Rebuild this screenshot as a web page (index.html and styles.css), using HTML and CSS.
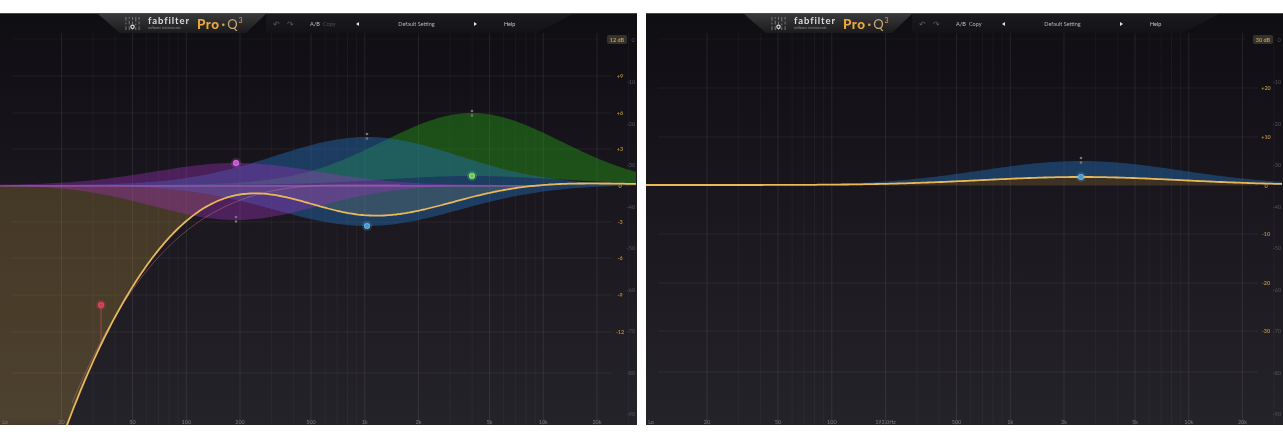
FILE: index.html
```html
<!DOCTYPE html>
<html lang="en">

<head>
	<meta charset="UTF-8" />
	<meta name="viewport" content="width=device-width, initial-scale=1.0" />
	<title>Pro-Q 3 curves</title>
	<link rel="stylesheet" href="styles.css">
</head>

<body>
	<div class="compare">
		<section class="panel">
			<header class="topbar">
				<div class="brand">
					<svg class="brand-icon" viewBox="0 0 16 16">
						<path d="M1 1v4M1 7v2M1 11v4M4.500 1v2M4.500 5v4M4.500 11v4M8 1v3M8 6v3M8 14v1M11.500 1v5M11.500 8v2M11.500 12v3M15 1v3M15 6v3M15 11v4" />
						<circle cx="8" cy="11.500" r="1.800" />
					</svg>
					<div class="brand-name">
						<span class="brand-word">fabfilter</span>
						<span class="brand-sub">software instruments</span>
					</div>
					<div class="product"><b>Pro</b><i>·</i><em>Q</em><sup>3</sup></div>
				</div>
				<div class="tools">
					<span class="undo">↶</span><span class="undo redo">↷</span>
					<span class="ab">A/B</span><span class="copy">Copy</span>
					<span class="arrow arrow-left"></span>
					<span class="preset">Default Setting</span>
					<span class="arrow arrow-right"></span>
					<span class="help">Help</span>
				</div>
			</header>
			<svg class="graph" id="graphA" viewBox="0 33 637 392"></svg>
		</section>
		<section class="panel">
			<header class="topbar">
				<div class="brand">
					<svg class="brand-icon" viewBox="0 0 16 16">
						<path d="M1 1v4M1 7v2M1 11v4M4.500 1v2M4.500 5v4M4.500 11v4M8 1v3M8 6v3M8 14v1M11.500 1v5M11.500 8v2M11.500 12v3M15 1v3M15 6v3M15 11v4" />
						<circle cx="8" cy="11.500" r="1.800" />
					</svg>
					<div class="brand-name">
						<span class="brand-word">fabfilter</span>
						<span class="brand-sub">software instruments</span>
					</div>
					<div class="product"><b>Pro</b><i>·</i><em>Q</em><sup>3</sup></div>
				</div>
				<div class="tools">
					<span class="undo">↶</span><span class="undo redo">↷</span>
					<span class="ab">A/B</span><span class="copy copy-on">Copy</span>
					<span class="arrow arrow-left"></span>
					<span class="preset">Default Setting</span>
					<span class="arrow arrow-right"></span>
					<span class="help">Help</span>
				</div>
			</header>
			<svg class="graph" id="graphB" viewBox="0 33 637 392"></svg>
		</section>
	</div>
	<script src="script.js"></script>
</body>

</html>
```

FILE: styles.css
```css
body {
	margin: 0;
	background: #fff;
	font-family: Lato, 'Open Sans', sans-serif;
}

.compare {
	display: flex;
	gap: 9px;
	padding-top: 13px;
}

.panel {
	width: 637px;
	height: 412px;
	display: flex;
	flex-direction: column;
	background: linear-gradient(#0f0e11 0%, #15121a 25%, #1f1c23 70%, #25232a 100%);
	overflow: hidden;
}

.topbar {
	height: 20px;
	display: flex;
	align-items: center;
	padding-left: 98px;
	border-top: 1px solid #4a4a4c;
	box-sizing: border-box;
	filter: blur(0.3px);
}

.brand {
	width: 168px;
	height: 19px;
	display: flex;
	align-items: center;
	box-sizing: border-box;
	padding-left: 25px;
	background: linear-gradient(#38383b, #1b1b1e);
	clip-path: polygon(0 0, 100% 0, 88% 100%, 13% 100%);
}

.brand-icon {
	width: 19px;
	height: 15px;
	margin-right: 6px;
}

.brand-icon path {
	stroke: #7c7c7c;
	stroke-width: 1;
	fill: none;
}

.brand-icon circle {
	fill: none;
	stroke: #e0e0e0;
	stroke-width: 1.200;
}

.brand-name {
	width: 42px;
	margin-right: 7px;
	display: flex;
	flex-direction: column;
}

.brand-word {
	font-size: 9.500px;
	font-weight: bold;
	line-height: 10px;
	letter-spacing: 0.900px;
	color: #dcdcdc;
}

.brand-sub {
	font-size: 3.500px;
	line-height: 5px;
	color: #8a8a8a;
	white-space: nowrap;
}

.product {
	display: flex;
	align-items: baseline;
	color: #e9a73c;
	font-size: 13px;
	line-height: 14px;
}

.product b {
	font-size: 13.500px;
	font-weight: 900;
	letter-spacing: 0.500px;
}

.product i {
	font-style: normal;
	font-weight: bold;
	margin: 0 2px;
	color: #d8a050;
}

.product em {
	font-style: normal;
	color: #c8a878;
}

.product sup {
	font-size: 7px;
	line-height: 7px;
	align-self: flex-start;
	margin-left: 1px;
	color: #d8a050;
}

.tools {
	width: 307px;
	height: 19px;
	display: flex;
	align-items: center;
	box-sizing: border-box;
	padding-left: 7px;
	font-size: 5.500px;
	color: #b4b4b4;
	background: linear-gradient(rgba(255, 255, 255, 0.05), rgba(255, 255, 255, 0.015));
	clip-path: polygon(0 0, 100% 0, 88% 100%, 0 100%);
}

.undo {
	width: 14px;
	font-size: 8px;
	color: #5a5a5a;
}

.redo {
	width: 23px;
}

.ab {
	width: 13px;
	color: #c4c4c4;
}

.copy {
	width: 33px;
	color: #4e4e4e;
}

.copy-on {
	color: #b4b4b4;
}

.arrow {
	width: 0;
	height: 0;
	border-top: 2.500px solid transparent;
	border-bottom: 2.500px solid transparent;
}

.arrow-left {
	border-right: 3px solid #e4e4e4;
}

.arrow-right {
	border-left: 3px solid #e4e4e4;
}

.preset {
	width: 115px;
	text-align: center;
}

.help {
	margin-left: 27px;
	color: #c4c4c4;
}

.graph {
	display: block;
	width: 637px;
	height: 392px;
	filter: blur(0.3px);
}

.grid-minor {
	stroke: rgba(255, 255, 255, 0.04);
	fill: none;
}

.grid-major {
	stroke: rgba(255, 255, 255, 0.08);
	fill: none;
}

.grid-level {
	stroke: rgba(255, 255, 255, 0.06);
	fill: none;
}

.grid-top {
	stroke: rgba(255, 255, 255, 0.03);
	fill: none;
}

.band-blue {
	fill: rgba(35, 115, 190, 0.42);
}

.band-green {
	fill: rgba(40, 170, 20, 0.4);
}

.band-purple {
	fill: rgba(160, 50, 190, 0.38);
}

.band-gain {
	fill: rgba(190, 150, 60, 0.22);
}

.zero-line {
	stroke: rgba(175, 95, 195, 0.6);
	stroke-width: 1.500;
}

.thin-curve {
	fill: none;
	stroke: rgba(205, 120, 130, 0.55);
	stroke-width: 0.800;
}

.main-curve {
	fill: none;
	stroke: #e8b85a;
	stroke-width: 1.800;
}

.stem {
	stroke: rgba(230, 90, 90, 0.5);
}

.range-dot {
	fill: #77747c;
}

.db-label {
	font-size: 5.500px;
	font-weight: bold;
	fill: #b08a3c;
	text-anchor: middle;
}

.grey-label {
	font-size: 5.500px;
	fill: #55535a;
	text-anchor: middle;
}

.freq-label {
	font-size: 5.500px;
	fill: #7a7880;
	text-anchor: middle;
}

.range-badge {
	fill: #35322e;
}

.badge-text {
	font-size: 5.500px;
	font-weight: bold;
	fill: #c09a50;
	text-anchor: middle;
}
```

FILE: script.js
```js
const ZERO = 185;
const FREQS = [20, 50, 100, 200, 500, 1000, 2000, 5000, 10000, 20000];
const FREQ_NAMES = ["20", "50", "100", "200", "500", "1k", "2k", "5k", "10k", "20k"];
const GREY_SCALE = ["-10", "-20", "-30", "-40", "-50", "-60", "-70", "-80", "-90"];

function freqX(f, left) {
	return left + 178.5 * Math.log10(f / 20);
}

function bell(x, center, height, spread) {
	const d = x - center;
	return height * Math.exp(-(d * d) / (2 * spread * spread));
}

// high pass drop in pixels, fitted by eye
function highPass(x) {
	if (x >= 340) return 0;
	const t = (340 - x) / 100;
	const s = 3.01 * t + 0.987 * t * t;
	return s * s;
}

// area between two bell heights, 0 = flat line
function bandPath(center, spread, top, bottom) {
	let up = "";
	let down = "";
	for (let x = 0; x <= 637; x += 3) {
		up += (x ? "L" : "M") + x + " " + (ZERO - bell(x, center, top, spread)).toFixed(1);
		down = "L" + x + " " + (ZERO - bell(x, center, bottom, spread)).toFixed(1) + down;
	}
	return up + down + "Z";
}

function linePath(fromX, toX, yOf) {
	let d = "";
	for (let x = fromX; x <= toX; x += 2) {
		d += (d ? "L" : "M") + x + " " + yOf(x).toFixed(1);
	}
	return d;
}

function gridMarkup(left, levels) {
	let minor = "";
	let major = "";
	for (let decade = 10; decade <= 10000; decade *= 10) {
		for (let n = 1; n <= 9; n++) {
			const f = decade * n;
			if (f < 20) continue;
			const x = freqX(f, left).toFixed(1);
			if (FREQS.includes(f)) major += "M" + x + " 33V425";
			else minor += "M" + x + " 33V425";
		}
	}
	let lines = "";
	levels.forEach((level) => {
		lines += "M12 " + level.y + "H612";
	});
	return `<path class="grid-minor" d="${minor}" /><path class="grid-major" d="${major}" /><path class="grid-level" d="${lines}" /><path class="grid-top" d="M12 39H600" />`;
}

function labelsMarkup(left, levels, badge, freqNames) {
	let out = "";
	levels.forEach((level) => {
		if (level.name) out += `<text class="db-label" x="620" y="${level.y + 2}">${level.name}</text>`;
	});
	GREY_SCALE.forEach((name, i) => {
		out += `<text class="grey-label" x="631" y="${(84 + i * 41.5).toFixed(1)}">${name}</text>`;
	});
	FREQS.forEach((f, i) => {
		out += `<text class="freq-label" x="${freqX(f, left).toFixed(1)}" y="424">${freqNames[i]}</text>`;
	});
	out += `<text class="freq-label" x="5" y="424">Lo</text>`;
	out += `<rect class="range-badge" x="607" y="35" width="20" height="9" rx="2" />`;
	out += `<text class="badge-text" x="617" y="41.500">${badge}</text>`;
	out += `<text class="grey-label" x="633" y="41.500">0</text>`;
	return out;
}

function node(x, y, color) {
	return `<circle cx="${x}" cy="${y}" r="5" fill="${color}" opacity="0.2" />` +
		`<circle cx="${x}" cy="${y}" r="3" fill="${color}" />` +
		`<circle cx="${x}" cy="${y}" r="1.300" fill="none" stroke="rgba(30,20,40,0.45)" stroke-width="0.700" />`;
}

function rangeDots(x, y) {
	return `<circle class="range-dot" cx="${x}" cy="${y}" r="1.300" /><circle class="range-dot" cx="${x}" cy="${y + 4.500}" r="1.300" />`;
}

function drawFirst() {
	const levels = [
		{ y: 76, name: "+9" }, { y: 113, name: "+6" }, { y: 149, name: "+3" }, { y: 185.5, name: "0" },
		{ y: 222, name: "-3" }, { y: 258, name: "-6" }, { y: 295, name: "-9" }, { y: 332, name: "-12" }, { y: 373, name: "" },
	];
	const gain = (x) => bell(x, 236, 22, 82) + bell(x, 367, -41, 92) + bell(x, 472, 9, 89);
	const mainY = (x) => ZERO - gain(x) + highPass(x);
	const thinY = (x) => ZERO + highPass(x) * 0.95;
	const main = linePath(60, 636, mainY);
	const hp = main + "L637 185L0 185L0 425L60 425Z";

	document.getElementById("graphA").innerHTML = `
		<defs><linearGradient id="hpFade" x1="0" y1="0" x2="0" y2="1">
			<stop offset="0" stop-color="#c09a40" stop-opacity="0.26" />
			<stop offset="0.9" stop-color="#c09a40" stop-opacity="0.26" />
			<stop offset="1" stop-color="#c09a40" stop-opacity="0.05" />
		</linearGradient></defs>
		${gridMarkup(61.500, levels)}
		<path fill="url(#hpFade)" d="${hp}" />
		<path class="band-green" d="${bandPath(472, 89, 72, 9)}" />
		<path class="band-blue" d="${bandPath(367, 92, 48, -41)}" />
		<path class="band-purple" d="${bandPath(236, 82, 22, -35)}" />
		<line class="zero-line" x1="0" y1="186" x2="540" y2="186" />
		<path class="thin-curve" d="${linePath(72, 400, thinY)}" />
		<path class="main-curve" d="${main}" />
		<line class="stem" x1="101" y1="305" x2="101" y2="340" />
		${rangeDots(236, 217)}${rangeDots(367, 134)}${rangeDots(472, 111)}
		${node(236, 163, "#e468f4")}${node(367, 226, "#62b4f2")}${node(472, 176, "#84f06e")}${node(101, 305, "#f0485a")}
		${labelsMarkup(61.500, levels, "12 dB", FREQ_NAMES)}`;
}

function drawSecond() {
	const levels = [
		{ y: 88, name: "+20" }, { y: 137, name: "+10" }, { y: 185.5, name: "0" }, { y: 234, name: "-10" },
		{ y: 283, name: "-20" }, { y: 331, name: "-30" }, { y: 372, name: "" },
	];
	const names = FREQ_NAMES.slice();
	names[3] = "192.0Hz";

	document.getElementById("graphB").innerHTML = `
		${gridMarkup(61, levels)}
		<path class="band-blue" d="${bandPath(435, 100, 24, 8)}" />
		<path class="band-gain" d="${bandPath(435, 100, 8, 0)}" />
		<path class="main-curve" d="${linePath(0, 636, (x) => ZERO - bell(x, 435, 8, 100))}" />
		${rangeDots(435, 158)}
		${node(435, 177, "#62b4f2")}
		${labelsMarkup(61, levels, "30 dB", names)}`;
}

drawFirst();
drawSecond();
```
